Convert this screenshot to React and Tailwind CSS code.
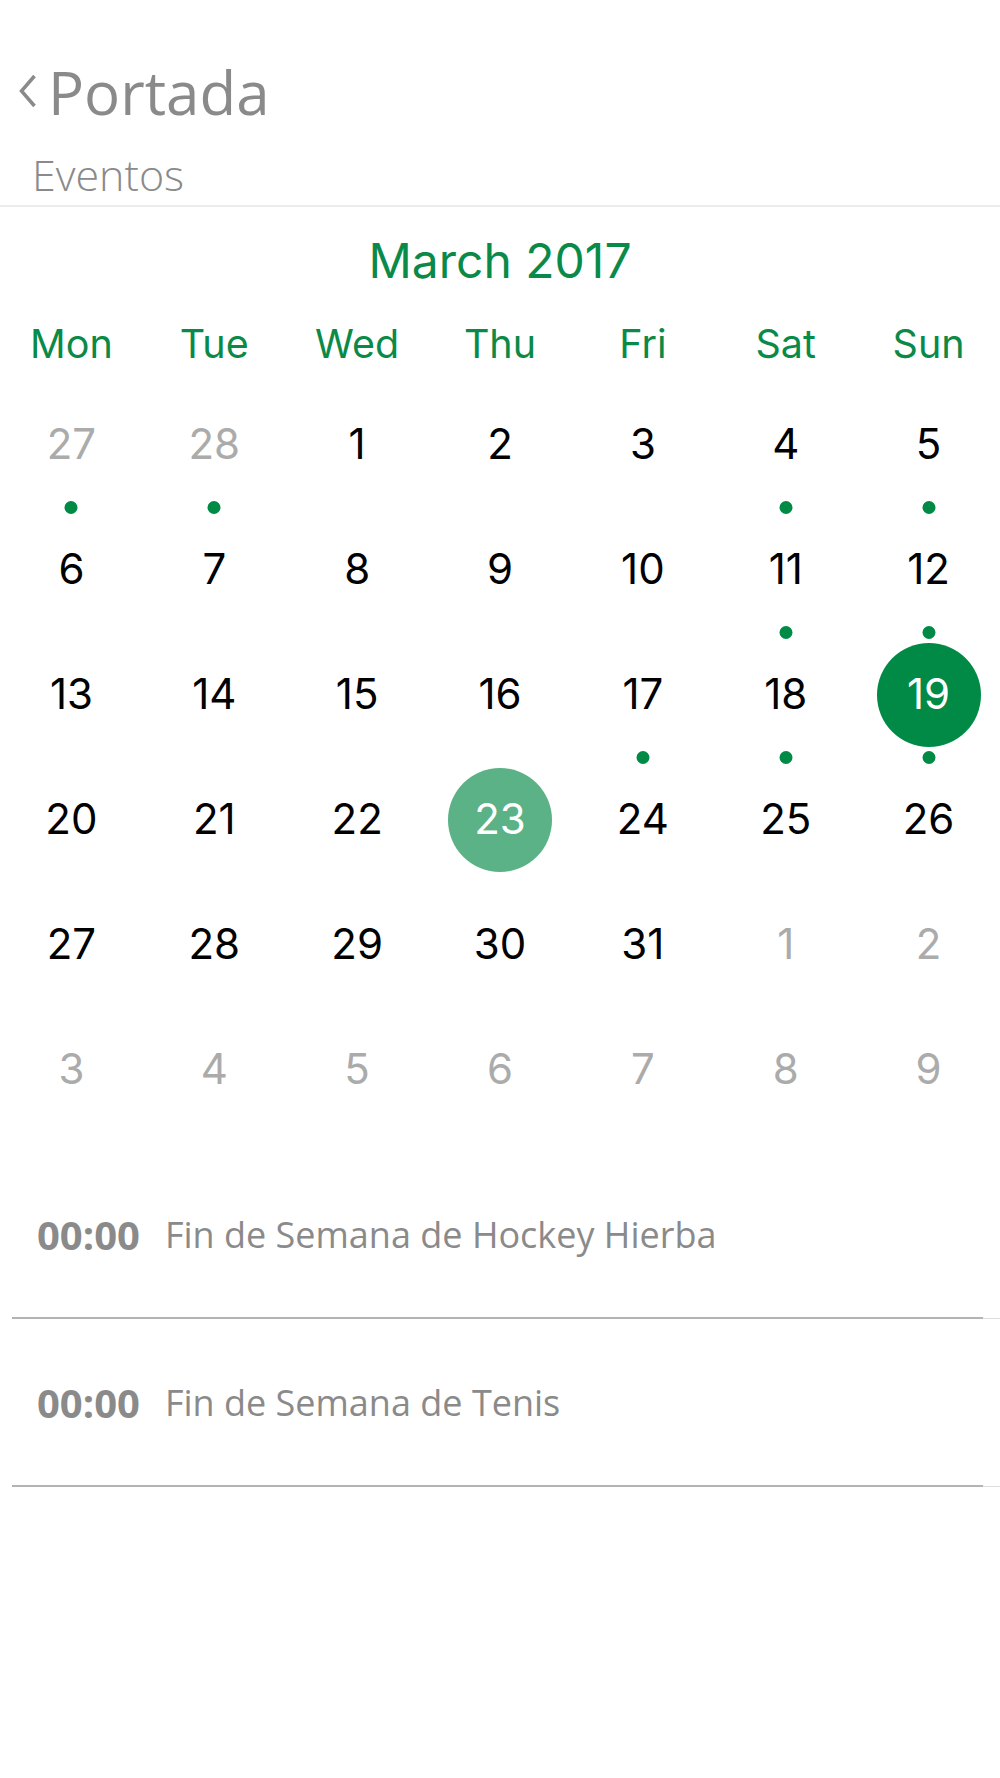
import React from "react";

const weeks = [
  [
    { d: 27, muted: true, dot: true },
    { d: 28, muted: true, dot: true },
    { d: 1 },
    { d: 2 },
    { d: 3 },
    { d: 4, dot: true },
    { d: 5, dot: true },
  ],
  [
    { d: 6 },
    { d: 7 },
    { d: 8 },
    { d: 9 },
    { d: 10 },
    { d: 11, dot: true },
    { d: 12, dot: true },
  ],
  [
    { d: 13 },
    { d: 14 },
    { d: 15 },
    { d: 16 },
    { d: 17, dot: true },
    { d: 18, dot: true },
    { d: 19, dot: true, selected: true },
  ],
  [
    { d: 20 },
    { d: 21 },
    { d: 22 },
    { d: 23, today: true },
    { d: 24 },
    { d: 25 },
    { d: 26 },
  ],
  [
    { d: 27 },
    { d: 28 },
    { d: 29 },
    { d: 30 },
    { d: 31 },
    { d: 1, muted: true },
    { d: 2, muted: true },
  ],
  [
    { d: 3, muted: true },
    { d: 4, muted: true },
    { d: 5, muted: true },
    { d: 6, muted: true },
    { d: 7, muted: true },
    { d: 8, muted: true },
    { d: 9, muted: true },
  ],
];

const days = ["Mon", "Tue", "Wed", "Thu", "Fri", "Sat", "Sun"];

const events = [
  { time: "00:00", title: "Fin de Semana de Hockey Hierba" },
  { time: "00:00", title: "Fin de Semana de Tenis" },
];

function DayCell({ cell }) {
  let numberClass = "text-black";
  if (cell.muted) numberClass = "text-[#ababab]";
  if (cell.selected || cell.today) numberClass = "text-white";
  return (
    <div className="relative flex h-[125px] items-center justify-center">
      {cell.selected && (
        <div className="absolute h-[104px] w-[104px] rounded-full bg-[#008a45]" />
      )}
      {cell.today && (
        <div className="absolute h-[104px] w-[104px] rounded-full bg-[#5ab286]" />
      )}
      <span
        className={`relative mt-[-1px] text-[42px] leading-none ${numberClass}`}
      >
        {cell.d}
      </span>
      {cell.dot && (
        <div className="absolute bottom-[-7px] left-1/2 h-[13px] w-[13px] -translate-x-1/2 rounded-full bg-[#008a45]" />
      )}
    </div>
  );
}

export default function App() {
  return (
    <div className="min-h-[1778px] w-[1000px] bg-white">
      {/* Header */}
      <div className="font-['Open_Sans',sans-serif] text-[#8a8a8a]">
        <div className="mt-[62px] flex h-[60px] items-center">
          <svg
            className="ml-[19px] mt-[-2px]"
            width="18"
            height="34"
            viewBox="0 0 18 34"
          >
            <polyline
              points="15.5,2 2.5,17 15.5,32"
              fill="none"
              stroke="#8a8a8a"
              strokeWidth="3.5"
              strokeLinecap="butt"
              strokeLinejoin="miter"
            />
          </svg>
          <span className="ml-[11px] text-[60px] leading-none">Portada</span>
        </div>
        <div className="ml-[32px] mt-[31px] h-[43px] text-[43px] font-light leading-none">
          Eventos
        </div>
        <div className="mt-[9px] h-[2px] bg-[#ececec]" />
      </div>

      {/* Calendar */}
      <div className="font-['Inter',sans-serif]">
        <div className="mt-[30px] h-[48px] text-center text-[48px] leading-none text-[#0a8a48]">
          March 2017
        </div>
        <div className="mt-[40px] grid h-[39px] grid-cols-7">
          {days.map((d) => (
            <div
              key={d}
              className="text-center text-[39.5px] leading-none text-[#0a8a48]"
            >
              {d}
            </div>
          ))}
        </div>
        <div className="mt-[18px] grid grid-cols-7">
          {weeks.flat().map((cell, i) => (
            <DayCell key={i} cell={cell} />
          ))}
        </div>
      </div>

      {/* Events */}
      <div className="mt-[19px] font-['Open_Sans',sans-serif] text-[#8a8a8a]">
        {events.map((e, i) => (
          <div key={i}>
            <div className="flex h-[166px] items-center pl-[37px] pt-[2px]">
              <span className="text-[40px] font-bold leading-none">
                {e.time}
              </span>
              <span className="ml-[25px] text-[36px] leading-none">
                {e.title}
              </span>
            </div>
            <div className="flex h-[2px] items-end">
              <div className="ml-[12px] h-[2px] flex-1 bg-[#b3b3b3]" />
              <div className="h-[1px] w-[17px] bg-[#dddddd]" />
            </div>
          </div>
        ))}
      </div>
    </div>
  );
}
